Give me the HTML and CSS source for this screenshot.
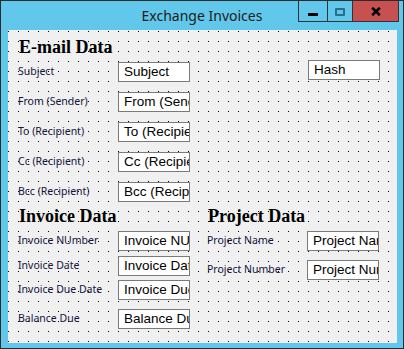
FILE: index.html
```html
<!DOCTYPE html>
<html lang="en">
<head>
  <meta charset="UTF-8">
  <meta name="viewport" content="width=device-width,initial-scale=1">
  <title>Exchange Invoices</title>
  <link rel="stylesheet" href="styles.css">
</head>
<body>
  <div class="window">
    <div class="titlebar">
      <span class="title">Exchange Invoices</span>
      <div class="caption-buttons">
        <span class="cap min"><i></i></span>
        <span class="cap max"><i></i></span>
        <span class="cap close">
          <svg width="10" height="9" viewBox="0 0 10 9"><path d="M1.2 0.8 L8.8 8.2 M8.8 0.8 L1.2 8.2" stroke="#000" stroke-width="2.6"/></svg>
        </span>
      </div>
    </div>

    <div class="client">
      <!-- mail fields -->
      <h2>E-mail Data</h2>
      <div class="row">
        <label>Subject</label><span class="box">Subject</span>
        <span class="box hash">Hash</span>
      </div>
      <div class="row"><label>From (Sender)</label><span class="box">From (Sender)</span></div>
      <div class="row"><label>To (Recipient)</label><span class="box">To (Recipient)</span></div>
      <div class="row"><label>Cc (Recipient)</label><span class="box">Cc (Recipient)</span></div>
      <div class="row"><label>Bcc (Recipient)</label><span class="box">Bcc (Recipient)</span></div>

      <div class="lower">
        <section class="invoice">
          <h2>Invoice Data</h2>
          <div class="row first"><label>Invoice NUmber</label><span class="box">Invoice NUmber</span></div>
          <div class="row gap5"><label>Invoice Date</label><span class="box">Invoice Date</span></div>
          <div class="row gap4"><label>Invoice Due Date</label><span class="box">Invoice Due Date</span></div>
          <div class="row gap9"><label>Balance Due</label><span class="box">Balance Due</span></div>
        </section>
        <section class="project">
          <h2>Project Data</h2>
          <div class="row first"><label>Project Name</label><span class="box">Project Name</span></div>
          <div class="row gap9"><label>Project Number</label><span class="box">Project Number</span></div>
        </section>
      </div>
    </div>
  </div>
</body>
</html>
```

FILE: styles.css
```css
body { margin: 0; background: #fff; }
.window { width: 402px; height: 347px; border: 1px solid #2b2b2b; background: #62c8eb; display: flex; flex-direction: column; }

.titlebar { height: 29px; display: grid; flex-shrink: 0; }
.title { grid-area: 1 / 1; justify-self: center; align-self: center; font-family: "Noto Sans", sans-serif; font-size: 14px; color: #1b1b1b; }
.caption-buttons { grid-area: 1 / 1; justify-self: end; align-self: start; display: flex; height: 20px; border: 1px solid #333; border-top: none; margin-right: 4px; margin-top: -1px; padding-top: 1px; }
.cap { display: flex; align-items: center; justify-content: center; }
.cap + .cap { border-left: 1px solid #333; }
.min { width: 28px; }
.min i { width: 10px; height: 3px; background: #000; margin-top: 7px; }
.max { width: 24px; }
.max i { width: 6px; height: 4px; border: 2px solid #2c6e8a; border-radius: 1px; margin-top: 2px; }
.close { width: 45px; background: #c75050; }

.client { flex: 1; margin: 0 6px 5px 7px; padding: 7px 0 0 10px; background-color: #f0f0f0; background-image: conic-gradient(from 270deg at 1px 1px, #000 90deg, transparent 0); background-size: 10px 10px; background-position: 0 1px; }

h2 { margin: 0 0 5px; padding-left: 1px; font-family: "Liberation Serif", serif; font-size: 18px; line-height: 20px; font-weight: bold; color: #000; }

.row { display: flex; align-items: center; height: 20px; }
.row + .row { margin-top: 10px; }
label { width: 100px; font-family: "Noto Sans", sans-serif; font-size: 10.5px; color: #14143c; margin-bottom: 2px; white-space: nowrap; }
.box { box-sizing: border-box; width: 72px; height: 20px; border: 1px solid #7a7a7a; background: #fff; padding: 0 0 0 5px; font-family: "Liberation Sans", sans-serif; font-size: 13.5px; line-height: 18px; color: #000; white-space: nowrap; overflow: hidden; }
.hash { margin-left: 118px; align-self: flex-start; margin-top: -2px; }

.lower { display: flex; margin-top: 4px; }
.invoice { width: 189px; }
.lower .row + .row.gap5 { margin-top: 5px; }
.lower .row + .row.gap4 { margin-top: 4px; }
.lower .row + .row.gap9 { margin-top: 9px; }
```
